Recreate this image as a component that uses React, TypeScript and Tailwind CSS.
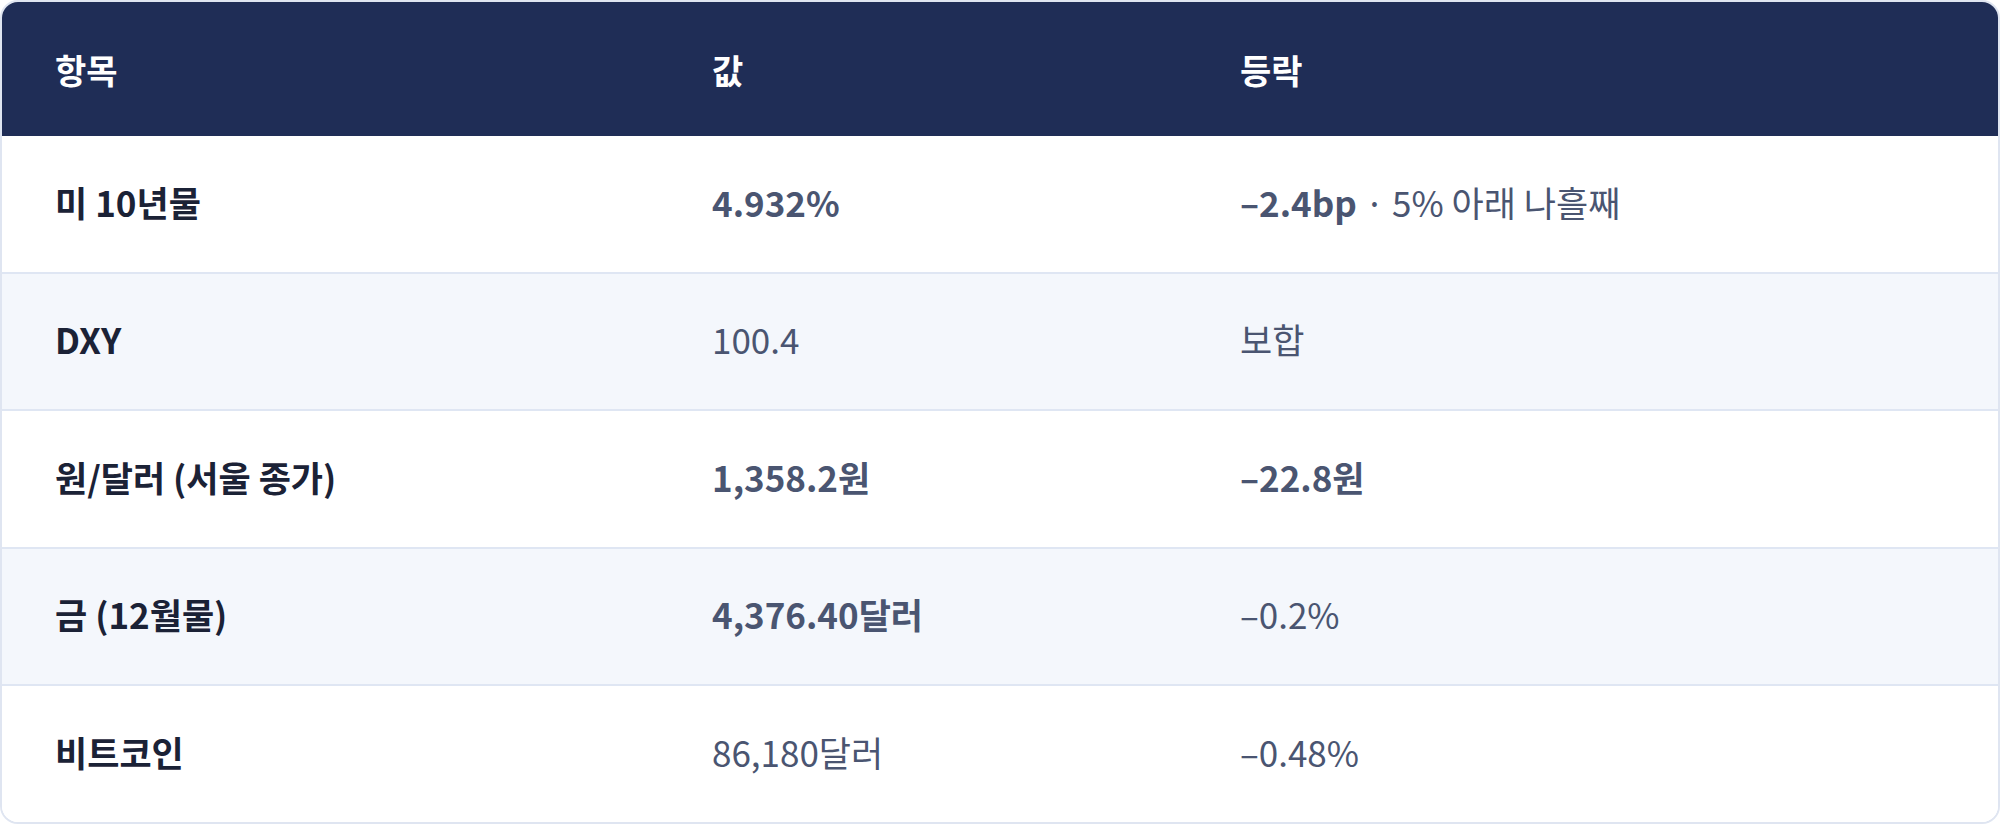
import React from "react";

type Row = {
  label: string;
  value: React.ReactNode;
  change: React.ReactNode;
};

const rows: Row[] = [
  {
    label: "미 10년물",
    value: <span className="font-semibold">4.932%</span>,
    change: (
      <>
        <span className="font-semibold">–2.4bp</span>
        <span> · 5% 아래 나흘째</span>
      </>
    ),
  },
  { label: "DXY", value: "100.4", change: "보합" },
  {
    label: "원/달러 (서울 종가)",
    value: <span className="font-semibold">1,358.2원</span>,
    change: <span className="font-semibold">–22.8원</span>,
  },
  {
    label: "금 (12월물)",
    value: <span className="font-semibold">4,376.40달러</span>,
    change: "–0.2%",
  },
  { label: "비트코인", value: "86,180달러", change: "–0.48%" },
];

export default function App() {
  return (
    <div
      className="w-[2000px] h-[824px] bg-white"
      style={{ fontFamily: '"Noto Sans CJK KR", "Noto Sans", sans-serif' }}
    >
      <div className="h-[824px] border-2 border-[#dfe5f1] rounded-[18px] overflow-hidden flex flex-col">
        <div className="grid grid-cols-[657px_528px_1fr] h-[134px] bg-[#1f2d56] text-white font-bold text-[34px] items-center">
          <div className="pl-[53px]">항목</div>
          <div className="pl-[53px]">값</div>
          <div className="pl-[53px]">등락</div>
        </div>
        {rows.map((r, i) => (
          <div
            key={i}
            className={
              "grid grid-cols-[657px_528px_1fr] flex-1 items-center text-[35px] " +
              (i % 2 === 1 ? "bg-[#f4f7fc] " : "bg-white ") +
              (i > 0 ? "border-t-2 border-[#dfe6f3]" : "")
            }
          >
            <div className="pl-[53px] font-bold text-[#1b2236] pb-[4px]">{r.label}</div>
            <div className="pl-[53px] text-[#4a5571] pb-[4px]">{r.value}</div>
            <div className="pl-[53px] text-[#4a5571] pb-[4px]">{r.change}</div>
          </div>
        ))}
      </div>
    </div>
  );
}
